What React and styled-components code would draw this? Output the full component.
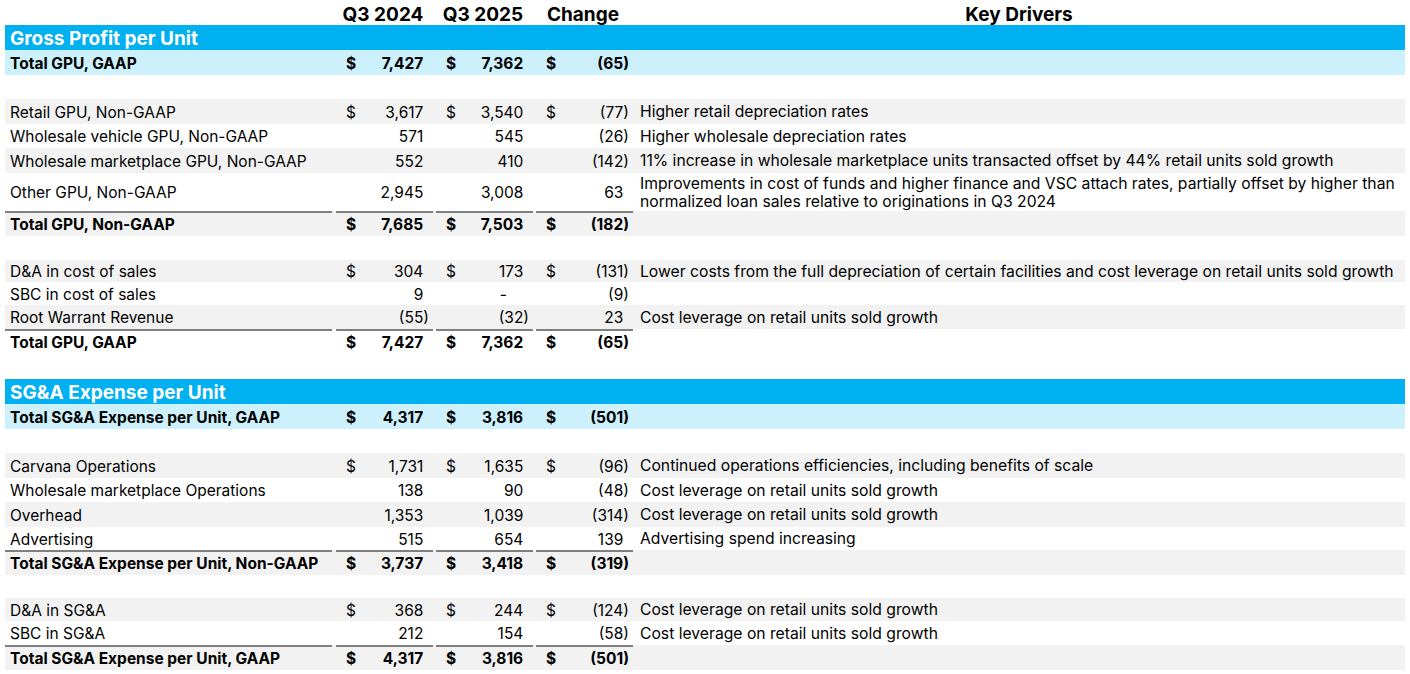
import React from "react";
import styled, { createGlobalStyle } from "styled-components";

const GlobalStyle = createGlobalStyle`
  html, body {
    margin: 0;
    padding: 0;
    background: #fff;
  }
  body {
    font-family: Inter, "Noto Sans", "Liberation Sans", sans-serif;
    color: #000;
  }
`;

const tones = {
  white: "#ffffff",
  grey: "#f2f2f2",
  light: "#ccf0fc",
  blue: "#00b0f0",
};

const Sheet = styled.div`
  width: 1400px;
  padding: 0 5px;
`;

const Row = styled.div`
  display: grid;
  grid-template-columns: 328px 100px 100px 100px 1fr;
  box-sizing: border-box;
  height: ${(p) => p.$h}px;
  padding-top: ${(p) => p.$pt ?? 1}px;
  background: ${(p) => tones[p.$tone] || tones.white};
  font-size: 15.5px;
  font-weight: ${(p) => (p.$bold ? 700 : 400)};
`;

const Label = styled.div`
  display: flex;
  align-items: center;
  margin-right: 1px;
  padding-left: 5px;
  white-space: nowrap;
  box-sizing: border-box;
  border-top: ${(p) => (p.$rule ? "2px solid #7f7f7f" : "none")};
`;

const NumCell = styled.div`
  display: flex;
  align-items: center;
  justify-content: space-between;
  margin-left: 3px;
  padding: 0 4px 0 10px;
  box-sizing: border-box;
  white-space: nowrap;
  border-top: ${(p) => (p.$rule ? "2px solid #7f7f7f" : "none")};
`;

const Paren = styled.span`
  visibility: hidden;
`;

const Dash = styled.span`
  padding-right: 22px;
`;

const Driver = styled.div`
  display: flex;
  align-items: center;
  padding-left: 7px;
  font-size: 15.7px;
  line-height: 18px;
  white-space: nowrap;
`;

const HeadCell = styled.div`
  display: flex;
  align-items: center;
  justify-content: center;
  font-size: 19px;
  font-weight: 700;
`;

const SectionTitle = styled.div`
  grid-column: 1 / -1;
  display: flex;
  align-items: center;
  padding-left: 5px;
  color: #fff;
  font-size: 19px;
  font-weight: 700;
`;

const fmt = (n) => Math.abs(n).toLocaleString("en-US");

const Value = ({ n }) => {
  if (n === 0) return <Dash>-</Dash>;
  if (n < 0) return <span>({fmt(n)})</span>;
  return (
    <span>
      {fmt(n)}
      <Paren>)</Paren>
    </span>
  );
};

const rows = [
  { kind: "head", h: 25 },
  { kind: "section", h: 25, title: "Gross Profit per Unit" },
  { h: 25, tone: "light", bold: true, dollar: true, label: "Total GPU, GAAP", v: [7427, 7362, -65] },
  { kind: "blank", h: 24 },
  { h: 25, tone: "grey", dollar: true, label: "Retail GPU, Non-GAAP", v: [3617, 3540, -77], note: "Higher retail depreciation rates" },
  { h: 24, label: "Wholesale vehicle GPU, Non-GAAP", v: [571, 545, -26], note: "Higher wholesale depreciation rates" },
  {
    h: 25,
    tone: "grey",
    label: "Wholesale marketplace GPU, Non-GAAP",
    v: [552, 410, -142],
    note: "11% increase in wholesale marketplace units transacted offset by 44% retail units sold growth",
  },
  {
    h: 38,
    label: "Other GPU, Non-GAAP",
    v: [2945, 3008, 63],
    note: [
      "Improvements in cost of funds and higher finance and VSC attach rates, partially offset by higher than",
      "normalized loan sales relative to originations in Q3 2024",
    ],
  },
  { h: 25, tone: "grey", bold: true, rule: true, dollar: true, label: "Total GPU, Non-GAAP", v: [7685, 7503, -182] },
  { kind: "blank", h: 24 },
  {
    h: 22,
    tone: "grey",
    dollar: true,
    label: "D&A in cost of sales",
    v: [304, 173, -131],
    note: "Lower costs from the full depreciation of certain facilities and cost leverage on retail units sold growth",
  },
  { h: 23, label: "SBC in cost of sales", v: [9, 0, -9] },
  { h: 24, tone: "grey", label: "Root Warrant Revenue", v: [-55, -32, 23], note: "Cost leverage on retail units sold growth" },
  { h: 25, bold: true, rule: true, dollar: true, label: "Total GPU, GAAP", v: [7427, 7362, -65] },
  { kind: "blank", h: 25 },
  { kind: "section", h: 25, title: "SG&A Expense per Unit" },
  { h: 25, tone: "light", bold: true, dollar: true, label: "Total SG&A Expense per Unit, GAAP", v: [4317, 3816, -501] },
  { kind: "blank", h: 24 },
  {
    h: 25,
    tone: "grey",
    dollar: true,
    label: "Carvana Operations",
    v: [1731, 1635, -96],
    note: "Continued operations efficiencies, including benefits of scale",
  },
  { h: 24, label: "Wholesale marketplace Operations", v: [138, 90, -48], note: "Cost leverage on retail units sold growth" },
  { h: 25, tone: "grey", label: "Overhead", v: [1353, 1039, -314], note: "Cost leverage on retail units sold growth" },
  { h: 23, label: "Advertising", v: [515, 654, 139], note: "Advertising spend increasing" },
  { h: 25, tone: "grey", bold: true, rule: true, dollar: true, label: "Total SG&A Expense per Unit, Non-GAAP", v: [3737, 3418, -319] },
  { kind: "blank", h: 23 },
  { h: 23, tone: "grey", dollar: true, label: "D&A in SG&A", v: [368, 244, -124], note: "Cost leverage on retail units sold growth" },
  { h: 24, label: "SBC in SG&A", v: [212, 154, -58], note: "Cost leverage on retail units sold growth" },
  { h: 25, tone: "grey", bold: true, rule: true, dollar: true, label: "Total SG&A Expense per Unit, GAAP", v: [4317, 3816, -501] },
];

const DataRow = ({ r }) => (
  <Row $h={r.h} $tone={r.tone} $bold={r.bold} $pt={r.rule ? 0 : 1}>
    <Label $rule={r.rule}>{r.label}</Label>
    {r.v.map((n, i) => (
      <NumCell key={i} $rule={r.rule}>
        <span>{r.dollar ? "$" : ""}</span>
        <Value n={n} />
      </NumCell>
    ))}
    <Driver>
      {Array.isArray(r.note) ? (
        <div>
          {r.note[0]}
          <br />
          {r.note[1]}
        </div>
      ) : (
        r.note
      )}
    </Driver>
  </Row>
);

const App = () => {
  return (
    <>
      <GlobalStyle />
      <Sheet>
        {rows.map((r, i) => {
          if (r.kind === "head")
            return (
              <Row key={i} $h={r.h} $pt={3}>
                <div />
                <HeadCell>Q3 2024</HeadCell>
                <HeadCell>Q3 2025</HeadCell>
                <HeadCell>Change</HeadCell>
                <HeadCell>Key Drivers</HeadCell>
              </Row>
            );
          if (r.kind === "section")
            return (
              <Row key={i} $h={r.h} $tone="blue" $pt={2}>
                <SectionTitle>{r.title}</SectionTitle>
              </Row>
            );
          if (r.kind === "blank") return <Row key={i} $h={r.h} />;
          return <DataRow key={i} r={r} />;
        })}
      </Sheet>
    </>
  );
};

export default App;
